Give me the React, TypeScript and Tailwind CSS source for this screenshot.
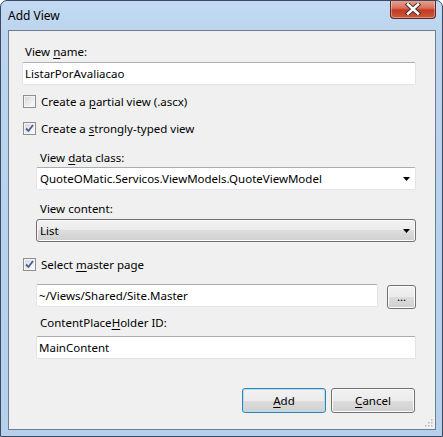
import React from "react";

const font = "font-['Segoe_UI','Noto_Sans',sans-serif] text-[11.5px] leading-[15px] text-black";

const Key = ({ children }: { children: React.ReactNode }) => (
    <span className="underline underline-offset-[2px] decoration-[1px]">{children}</span>
);

const Checkbox = ({ checked, children }: { checked?: boolean; children: React.ReactNode }) => (
    <div className="flex items-center h-[13px]">
        <div className="w-[13px] h-[13px] border border-[#8e8f8f] bg-[#f4f4f4] p-[1px] shrink-0">
            <div className="w-full h-full bg-[linear-gradient(135deg,#d8d8d8,#fbfbfb)] flex items-center justify-center">
                {checked && (
                    <svg width="9" height="9" viewBox="0 0 9 9">
                        <path d="M1 4.5 L3.5 7 L8 1" fill="none" stroke="#4a5f97" strokeWidth="1.8" />
                    </svg>
                )}
            </div>
        </div>
        <span className="ml-[5px]">{children}</span>
    </div>
);

const TextBox = ({ value, className = "" }: { value: string; className?: string }) => (
    <div
        className={`h-[23px] border border-[#e2e3ea] border-t-[#abadb3] rounded-[2px] bg-white flex items-center pl-[2px] ${className}`}
    >
        {value}
    </div>
);

const Arrow = () => (
    <svg width="7" height="4" viewBox="0 0 7 4" className="shrink-0">
        <path d="M0 0 H7 L3.5 4 Z" fill="#000" />
    </svg>
);

const Button = ({ children, isDefault }: { children: React.ReactNode; isDefault?: boolean }) => (
    <div
        className={`w-[84px] h-[25px] rounded-[3px] border flex items-center justify-center bg-[linear-gradient(to_bottom,#f2f2f2_0%,#ebebeb_50%,#dddddd_50%,#cfcfcf_100%)] ${
            isDefault
                ? "border-[#3c7fb1] shadow-[inset_0_0_0_1px_#a6e2f8]"
                : "border-[#707070] shadow-[inset_0_0_0_1px_#fcfcfc]"
        }`}
    >
        {children}
    </div>
);

export default function App() {
    return (
        <div
            className={`w-[443px] h-[437px] flex flex-col border border-[#3a4a63] rounded-t-[7px] overflow-hidden bg-[linear-gradient(to_bottom,#c3daf2_0px,#bcd4ee_30px,#b6cfea_100%)] ${font}`}
        >
            {/* title bar */}
            <div className="h-[29px] flex justify-between items-start shrink-0">
                <span className="ml-[7px] mt-[7px] text-[12px]">Add View</span>
                <div className="w-[46px] h-[19px] -mt-[1px] mr-[6px] rounded-b-[4px] border border-[#5a2a24] border-t-0 bg-[linear-gradient(to_bottom,#eba595_0%,#d9705a_45%,#c23a22_55%,#d0583a_100%)] shadow-[inset_0_0_0_1px_rgba(255,255,255,0.35)] flex items-center justify-center">
                    <svg width="16" height="12" viewBox="0 0 16 12">
                        <path d="M3 1.5 L13 10.5 M13 1.5 L3 10.5" stroke="#3a2a2a" strokeWidth="4.4" strokeLinecap="square" />
                        <path d="M3 1.5 L13 10.5 M13 1.5 L3 10.5" stroke="#ffffff" strokeWidth="2.6" strokeLinecap="square" />
                    </svg>
                </div>
            </div>

            {/* client area */}
            <div className="relative flex-1 ml-[7px] mr-[6px] mb-[6px] border border-[#6f7d91] bg-[#f0f0f0] flex flex-col pl-[13px] pr-[19px]">
                <span className="mt-[13px] ml-[3px]">
                    View <Key>n</Key>ame:
                </span>
                <TextBox value="ListarPorAvaliacao" className="mt-[3px]" />

                <div className="mt-[10px] ml-[1px]">
                    <Checkbox>
                        Create a <Key>p</Key>artial view (.ascx)
                    </Checkbox>
                </div>
                <div className="mt-[14px] ml-[1px]">
                    <Checkbox checked>
                        Create a <Key>s</Key>trongly-typed view
                    </Checkbox>
                </div>

                <div className="flex flex-col pl-[14px]">
                    <span className="mt-[15px] ml-[4px]">
                        View <Key>d</Key>ata class:
                    </span>
                    <div className="mt-[2px] h-[23px] border border-[#e2e3ea] border-t-[#abadb3] rounded-[2px] bg-white flex items-center justify-between pl-[3px] pr-[5px]">
                        <span>QuoteOMatic.Servicos.ViewModels.QuoteViewModel</span>
                        <Arrow />
                    </div>
                    <span className="mt-[11px] ml-[4px]">View content:</span>
                    <div className="mt-[3px] h-[23px] rounded-[3px] border border-[#707070] shadow-[inset_0_0_0_1px_#fafafa] bg-[linear-gradient(to_bottom,#f2f2f2_0%,#ebebeb_50%,#dddddd_50%,#cfcfcf_100%)] flex items-center justify-between pl-[3px] pr-[5px]">
                        <span>List</span>
                        <Arrow />
                    </div>
                </div>

                <div className="mt-[16px] ml-[1px]">
                    <Checkbox checked>
                        Select <Key>m</Key>aster page
                    </Checkbox>
                </div>

                <div className="flex flex-col pl-[14px]">
                    <div className="mt-[13px] flex items-start">
                        <TextBox value="~/Views/Shared/Site.Master" className="flex-1" />
                        <div className="ml-[9px] mt-[1px] w-[29px] h-[24px] rounded-[3px] border border-[#707070] shadow-[inset_0_0_0_1px_#fcfcfc] bg-[linear-gradient(to_bottom,#f2f2f2_0%,#ebebeb_50%,#dddddd_50%,#cfcfcf_100%)] flex items-center justify-center pb-[2px]">
                            ...
                        </div>
                    </div>
                    <span className="mt-[6px] ml-[4px]">
                        ContentPlace<Key>H</Key>older ID:
                    </span>
                    <TextBox value="MainContent" className="mt-[6px]" />
                </div>

                <div className="mt-[29px] flex justify-end gap-[5px] pr-[1px]">
                    <Button isDefault>
                        <Key>A</Key>dd
                    </Button>
                    <Button>
                        <Key>C</Key>ancel
                    </Button>
                </div>

                {/* resize grip */}
                <svg width="10" height="10" viewBox="0 0 10 10" className="absolute right-[2px] bottom-[2px]">
                    {[
                        [8, 2],
                        [5, 5],
                        [8, 5],
                        [2, 8],
                        [5, 8],
                        [8, 8],
                    ].map(([x, y]) => (
                        <rect key={`${x}-${y}`} x={x} y={y} width="1.5" height="1.5" fill="#b8b8b8" />
                    ))}
                </svg>
            </div>
        </div>
    );
}
